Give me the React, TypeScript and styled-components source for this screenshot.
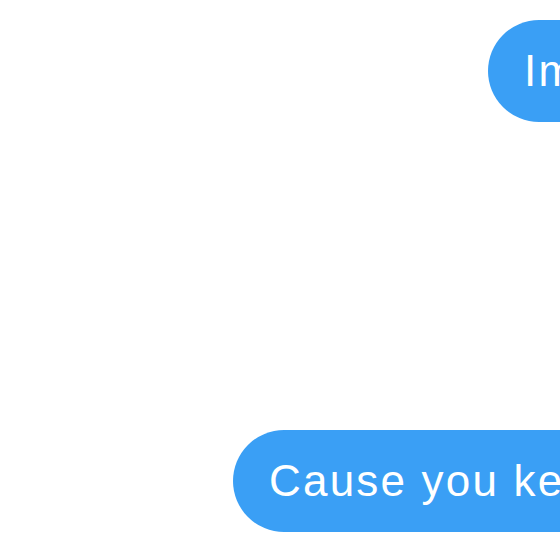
import React from 'react'
import styled, {createGlobalStyle} from 'styled-components'

const GlobalStyle = createGlobalStyle`
  html, body {
    margin: 0;
    padding: 0;
    background: #ffffff;
  }
`

const Thread = styled.div`
  width: 560px;
  height: 560px;
  overflow: hidden;
  display: flex;
  flex-direction: column;
  gap: 308px;
  padding-top: 20px;
  box-sizing: border-box;
  background: #ffffff;
`

const Row = styled.div<{$indent: number}>`
  display: flex;
  padding-left: ${p => p.$indent}px;
`

const Bubble = styled.div`
  flex: none;
  height: 102px;
  display: flex;
  align-items: center;
  padding: 0 40px 0 36px;
  border-radius: 51px;
  background: #3a9ff5;
  color: #ffffff;
  font-family: 'Liberation Sans', Arial, sans-serif;
  font-size: 44px;
  letter-spacing: 2.2px;
  white-space: nowrap;
`

const messages = [
  {text: 'Im on my way', indent: 488},
  {text: 'Cause you keep me waiting', indent: 233},
]

export default function App() {
  return (
    <>
      <GlobalStyle />
      <Thread>
        {messages.map(m => (
          <Row key={m.text} $indent={m.indent}>
            <Bubble>{m.text}</Bubble>
          </Row>
        ))}
      </Thread>
    </>
  )
}
